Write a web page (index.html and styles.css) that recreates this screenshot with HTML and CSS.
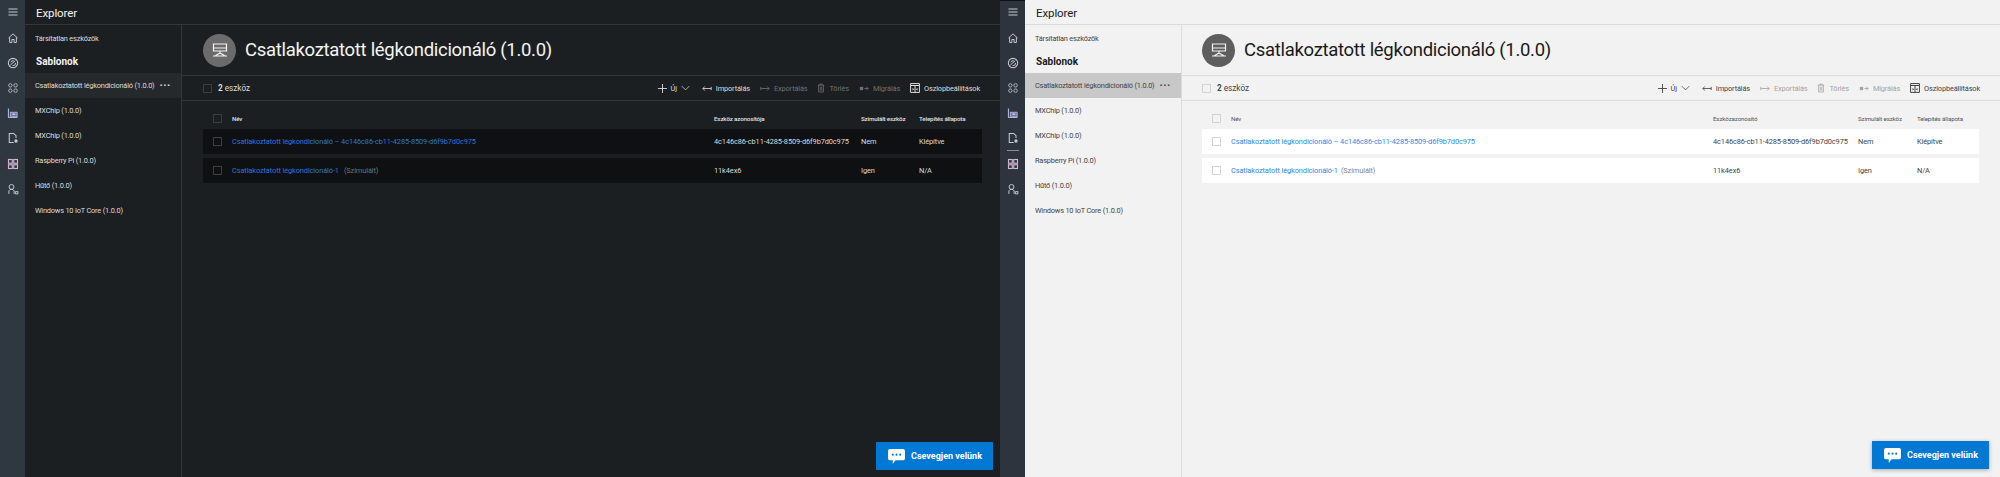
FILE: index.html
```html
<!DOCTYPE html>
<html lang="hu">
<head>
    <meta charset="UTF-8">
    <title>Explorer</title>
    <link rel="stylesheet" href="styles.css">
</head>
<body>
    <svg class="sprite" width="0" height="0">
        <symbol id="i-menu" viewBox="0 0 16 16"><path d="M2 4h12M2 8h12M2 12h12" fill="none" stroke="currentColor" stroke-width="1.6"/></symbol>
        <symbol id="i-home" viewBox="0 0 16 16"><path d="M2 8l6-5.500L14 8M3.500 7v7h3v-4h3v4h3V7" fill="none" stroke="currentColor" stroke-width="1.300"/></symbol>
        <symbol id="i-gauge" viewBox="0 0 16 16"><circle cx="8" cy="8" r="6.200" fill="none" stroke="currentColor" stroke-width="1.400"/><path d="M4.500 10.500L11 5M5 7a3.500 3.500 0 0 1 4-2M11.500 8a3.500 3.500 0 0 1-4 3.500" fill="none" stroke="currentColor" stroke-width="1.300"/></symbol>
        <symbol id="i-apps" viewBox="0 0 16 16"><g fill="none" stroke="currentColor" stroke-width="1.100"><circle cx="4.500" cy="4.500" r="2.300"/><circle cx="11.500" cy="4.500" r="2.300"/><circle cx="4.500" cy="11.500" r="2.300"/><circle cx="11.500" cy="11.500" r="2.300"/></g></symbol>
        <symbol id="i-chart" viewBox="0 0 16 16"><path d="M2 2v12h12" fill="none" stroke="#9fb6e0" stroke-width="1.600"/><path d="M4.500 7h9v6h-9z" fill="#5f78b0" stroke="#d9b9d4" stroke-width="1.100"/><path d="M7 9.500h4" stroke="#fff" stroke-width="1.200"/></symbol>
        <symbol id="i-doc" viewBox="0 0 16 16"><path d="M9 14H3V2h6l3 3v3" fill="none" stroke="currentColor" stroke-width="1.400"/><circle cx="12" cy="12" r="2.200" fill="currentColor"/></symbol>
        <symbol id="i-grid" viewBox="0 0 16 16"><g fill="none" stroke="#d6b8d6" stroke-width="1.500"><rect x="2" y="2" width="5" height="5"/><rect x="9" y="2" width="5" height="5"/><rect x="2" y="9" width="5" height="5"/><rect x="9" y="9" width="5" height="5"/></g></symbol>
        <symbol id="i-user" viewBox="0 0 16 16"><path d="M2.500 14.500v-4a4 4 0 0 1 7 0v4M6 8.500a3 3 0 1 0 0-6.500 3 3 0 0 0 0 6.500z" fill="none" stroke="currentColor" stroke-width="1.300"/><rect x="11.500" y="11.500" width="3" height="3" fill="none" stroke="currentColor" stroke-width="1.200"/></symbol>
        <symbol id="i-device" viewBox="0 0 16 16"><path d="M1.500 2h13v7h-13zM1.500 6h13M8 9v2M3 14l5-3 5 3zM1 14h14" fill="none" stroke="currentColor" stroke-width="1.200"/></symbol>
        <symbol id="i-plus" viewBox="0 0 12 12"><path d="M6 0v12M0 6h12" fill="none" stroke="currentColor" stroke-width="1.200"/></symbol>
        <symbol id="i-chevron" viewBox="0 0 12 8"><path d="M1 1.500l5 5 5-5" fill="none" stroke="currentColor"/></symbol>
        <symbol id="i-import" viewBox="0 0 12 8"><path d="M1 4h10M3.500 1.500L1 4l2.500 2.500M11 2v4" fill="none" stroke="currentColor"/></symbol>
        <symbol id="i-export" viewBox="0 0 12 8"><path d="M1 4h10M8.500 1.500L11 4 8.500 6.500M1 2v4" fill="none" stroke="currentColor"/></symbol>
        <symbol id="i-trash" viewBox="0 0 10 12"><path d="M1 2.500h8M3.500 2.500V1h3v1.500M2 2.500V11h6V2.500M4 4.500v5M6 4.500v5" fill="none" stroke="currentColor"/></symbol>
        <symbol id="i-migrate" viewBox="0 0 12 8"><path d="M1 2h4v4H1z" fill="currentColor"/><path d="M6.500 4H11M9 2l2 2-2 2" fill="none" stroke="currentColor"/></symbol>
        <symbol id="i-columns" viewBox="0 0 12 12"><path d="M.7.700h10.600v10.600H.7zM.7 3h10.600M6 3v8.300" fill="none" stroke="currentColor" stroke-width="1.200"/><path d="M3 6l2 1.500L3 9zM9 6L7 7.500 9 9z" fill="currentColor"/></symbol>
        <symbol id="i-chat" viewBox="0 0 18 16"><path d="M2 0h14a2 2 0 0 1 2 2v8a2 2 0 0 1-2 2H8l-3 4v-4H2a2 2 0 0 1-2-2V2a2 2 0 0 1 2-2z" fill="currentColor"/><circle cx="5" cy="6" r="1.100" fill="#0078d4"/><circle cx="9" cy="6" r="1.100" fill="#0078d4"/><circle cx="13" cy="6" r="1.100" fill="#0078d4"/></symbol>
    </svg>

    <!-- dark theme -->
    <div class="pane pane-dark">
        <nav class="rail">
            <svg class="rail-icon menu"><use href="#i-menu"/></svg>
            <svg class="rail-icon"><use href="#i-home"/></svg>
            <svg class="rail-icon"><use href="#i-gauge"/></svg>
            <svg class="rail-icon"><use href="#i-apps"/></svg>
            <svg class="rail-icon"><use href="#i-chart"/></svg>
            <svg class="rail-icon last"><use href="#i-doc"/></svg>
            <span class="rail-sep"></span>
            <svg class="rail-icon"><use href="#i-grid"/></svg>
            <svg class="rail-icon"><use href="#i-user"/></svg>
        </nav>
        <div class="shell">
            <header class="topbar">Explorer</header>
            <div class="body">
                <aside class="side">
                    <div class="side-link">Társítatlan eszközök</div>
                    <div class="side-title">Sablonok</div>
                    <div class="side-item selected">Csatlakoztatott légkondicionáló (1.0.0)<span class="dots">···</span></div>
                    <div class="side-item">MXChip (1.0.0)</div>
                    <div class="side-item">MXChip (1.0.0)</div>
                    <div class="side-item">Raspberry Pi (1.0.0)</div>
                    <div class="side-item">Hűtő (1.0.0)</div>
                    <div class="side-item">Windows 10 IoT Core (1.0.0)</div>
                </aside>
                <main class="main">
                    <div class="title-row">
                        <div class="avatar"><svg><use href="#i-device"/></svg></div>
                        <h1>Csatlakoztatott légkondicionáló (1.0.0)</h1>
                    </div>
                    <div class="toolbar">
                        <span class="check"></span>
                        <span class="count"><b>2</b> eszköz</span>
                        <div class="actions">
                            <span class="action new"><svg class="ic-plus"><use href="#i-plus"/></svg>Új<svg class="ic-chev"><use href="#i-chevron"/></svg></span>
                            <span class="action"><svg class="ic"><use href="#i-import"/></svg>Importálás</span>
                            <span class="action off"><svg class="ic"><use href="#i-export"/></svg>Exportálás</span>
                            <span class="action off"><svg class="ic-trash"><use href="#i-trash"/></svg>Törlés</span>
                            <span class="action off"><svg class="ic"><use href="#i-migrate"/></svg>Migrálás</span>
                            <span class="action"><svg class="ic-cols"><use href="#i-columns"/></svg>Oszlopbeállítások</span>
                        </div>
                    </div>
                    <div class="table">
                        <div class="row head">
                            <span class="check"></span><span>Név</span><span>Eszköz azonosítója</span><span>Szimulált eszköz</span><span>Telepítés állapota</span>
                        </div>
                        <div class="row">
                            <span class="check"></span><a class="link">Csatlakoztatott légkondicionáló – 4c146c86-cb11-4285-8509-d6f9b7d0c975</a><span>4c146c86-cb11-4285-8509-d6f9b7d0c975</span><span>Nem</span><span>Kiépítve</span>
                        </div>
                        <div class="row">
                            <span class="check"></span><span><a class="link">Csatlakoztatott légkondicionáló-1</a><span class="sim">(Szimulált)</span></span><span>11k4ex6</span><span>Igen</span><span>N/A</span>
                        </div>
                    </div>
                </main>
            </div>
        </div>
        <div class="chat"><svg><use href="#i-chat"/></svg>Csevegjen velünk</div>
    </div>

    <!-- light theme -->
    <div class="pane pane-light">
        <nav class="rail">
            <svg class="rail-icon menu"><use href="#i-menu"/></svg>
            <svg class="rail-icon"><use href="#i-home"/></svg>
            <svg class="rail-icon"><use href="#i-gauge"/></svg>
            <svg class="rail-icon"><use href="#i-apps"/></svg>
            <svg class="rail-icon"><use href="#i-chart"/></svg>
            <svg class="rail-icon last"><use href="#i-doc"/></svg>
            <span class="rail-sep"></span>
            <svg class="rail-icon"><use href="#i-grid"/></svg>
            <svg class="rail-icon"><use href="#i-user"/></svg>
        </nav>
        <div class="shell">
            <header class="topbar">Explorer</header>
            <div class="body">
                <aside class="side">
                    <div class="side-link">Társítatlan eszközök</div>
                    <div class="side-title">Sablonok</div>
                    <div class="side-item selected">Csatlakoztatott légkondicionáló (1.0.0)<span class="dots">···</span></div>
                    <div class="side-item">MXChip (1.0.0)</div>
                    <div class="side-item">MXChip (1.0.0)</div>
                    <div class="side-item">Raspberry Pi (1.0.0)</div>
                    <div class="side-item">Hűtő (1.0.0)</div>
                    <div class="side-item">Windows 10 IoT Core (1.0.0)</div>
                </aside>
                <main class="main">
                    <div class="title-row">
                        <div class="avatar"><svg><use href="#i-device"/></svg></div>
                        <h1>Csatlakoztatott légkondicionáló (1.0.0)</h1>
                    </div>
                    <div class="toolbar">
                        <span class="check"></span>
                        <span class="count"><b>2</b> eszköz</span>
                        <div class="actions">
                            <span class="action new"><svg class="ic-plus"><use href="#i-plus"/></svg>Új<svg class="ic-chev"><use href="#i-chevron"/></svg></span>
                            <span class="action"><svg class="ic"><use href="#i-import"/></svg>Importálás</span>
                            <span class="action off"><svg class="ic"><use href="#i-export"/></svg>Exportálás</span>
                            <span class="action off"><svg class="ic-trash"><use href="#i-trash"/></svg>Törlés</span>
                            <span class="action off"><svg class="ic"><use href="#i-migrate"/></svg>Migrálás</span>
                            <span class="action"><svg class="ic-cols"><use href="#i-columns"/></svg>Oszlopbeállítások</span>
                        </div>
                    </div>
                    <div class="table">
                        <div class="row head">
                            <span class="check"></span><span>Név</span><span>Eszközazonosító</span><span>Szimulált eszköz</span><span>Telepítés állapota</span>
                        </div>
                        <div class="row">
                            <span class="check"></span><a class="link">Csatlakoztatott légkondicionáló – 4c146c86-cb11-4285-8509-d6f9b7d0c975</a><span>4c146c86-cb11-4285-8509-d6f9b7d0c975</span><span>Nem</span><span>Kiépítve</span>
                        </div>
                        <div class="row">
                            <span class="check"></span><span><a class="link">Csatlakoztatott légkondicionáló-1</a><span class="sim">(Szimulált)</span></span><span>11k4ex6</span><span>Igen</span><span>N/A</span>
                        </div>
                    </div>
                </main>
            </div>
        </div>
        <div class="chat"><svg><use href="#i-chat"/></svg>Csevegjen velünk</div>
    </div>
</body>
</html>
```

FILE: styles.css
```css
* {
    box-sizing: border-box;
}

html, body {
    margin: 0;
    height: 100%;
    overflow: hidden;
}

body {
    display: flex;
    font-family: Roboto, "Open Sans", sans-serif;
    font-size: 7.4px;
}

.sprite {
    position: absolute;
}

.pane {
    position: relative;
    display: flex;
    width: 1000px;
    height: 100%;
    background: var(--bg);
    color: var(--text);
}

.pane-dark {
    --bg: #1b1f21;
    --rail: #2f3741;
    --line: #33373a;
    --text: #dcdcdc;
    --strong: #f4f4f4;
    --selected: #26292c;
    --row: #0e1012;
    --link: #2f76d2;
    --muted: #707070;
    --check: #3a3d40;
    --avatar: #6b6b6b;
    --head: #e0e0e0;
    --sep: transparent;
    --pad-left: 21px;
    --pad-right: 18px;
    --chat-right: 7px;
}

.pane-light {
    --bg: #f2f2f2;
    --rail: #2d343d;
    --line: #dcdcdc;
    --text: #444;
    --strong: #1a1a1a;
    --selected: #c8c8c8;
    --row: #fff;
    --link: #2f8ae5;
    --muted: #a4a4a4;
    --check: #d4d4d4;
    --avatar: #5e5e5e;
    --head: #555;
    --sep: #8a9098;
    --pad-left: 20px;
    --pad-right: 21px;
    --chat-right: 11px;
}

/* left icon rail */
.rail {
    display: flex;
    flex-direction: column;
    align-items: center;
    flex: 0 0 25px;
    padding-top: 6px;
    background: var(--rail);
    color: #c6cad0;
}

.rail-icon {
    width: 12px;
    height: 12px;
    margin-bottom: 13px;
}

.rail-icon.menu {
    margin-bottom: 14px;
}

.rail-icon.last {
    margin-bottom: 6px;
}

.rail-sep {
    width: 12px;
    height: 1px;
    margin-bottom: 7px;
    background: var(--sep);
}

.pane-light .rail {
    border-top: 1px solid #111;
    padding-top: 5px;
}

.shell {
    display: flex;
    flex-direction: column;
    flex: 1;
    min-width: 0;
}

.topbar {
    height: 25px;
    padding: 5px 0 0 11px;
    border-bottom: 1px solid var(--line);
    color: var(--strong);
    font-size: 11.5px;
    letter-spacing: -0.1px;
    line-height: 16px;
}

.body {
    display: flex;
    flex: 1;
}

/* explorer column */
.side {
    flex: 0 0 157px;
    min-width: 0;
    padding-top: 4px;
    border-right: 1px solid var(--line);
    letter-spacing: -0.2px;
}

.side-link,
.side-item {
    padding-left: 10px;
    white-space: nowrap;
}

.side-link {
    height: 19px;
    line-height: 19px;
}

.side-title {
    height: 25px;
    padding-left: 11px;
    color: var(--strong);
    font-size: 10px;
    font-weight: 700;
    letter-spacing: 0;
    line-height: 28px;
}

.side-item {
    display: flex;
    align-items: center;
    height: 25px;
}

.side-item.selected {
    background: var(--selected);
}

.dots {
    margin-left: 5px;
    font-size: 11px;
    font-weight: 700;
    letter-spacing: 0.5px;
}

/* main area */
.main {
    flex: 1;
    min-width: 0;
}

.title-row {
    display: flex;
    align-items: center;
    gap: 9px;
    height: 51px;
    padding-left: var(--pad-left);
    border-bottom: 1px solid var(--line);
}

.avatar {
    display: flex;
    align-items: center;
    justify-content: center;
    width: 33px;
    height: 33px;
    border-radius: 50%;
    background: var(--avatar);
    color: #f2f2f2;
}

.avatar svg {
    width: 16px;
    height: 16px;
}

h1 {
    margin: 0;
    color: var(--strong);
    font-size: 18.5px;
    font-weight: 400;
    letter-spacing: -0.3px;
}

.toolbar {
    display: flex;
    align-items: center;
    height: 25px;
    padding: 0 20px 0 var(--pad-left);
    border-bottom: 1px solid var(--line);
}

.check {
    display: block;
    width: 9px;
    height: 9px;
    border: 1px solid var(--check);
}

.count {
    margin-left: 6px;
    font-size: 8.2px;
}

.actions {
    display: flex;
    align-items: center;
    gap: 10px;
    margin-left: auto;
    letter-spacing: -0.15px;
}

.action {
    display: flex;
    align-items: center;
    gap: 4px;
    white-space: nowrap;
}

.action.off {
    color: var(--muted);
}

.action.new {
    margin-right: 2px;
}

.ic {
    width: 10px;
    height: 7px;
}

.ic-plus {
    width: 9px;
    height: 9px;
}

.ic-chev {
    width: 9px;
    height: 6px;
}

.ic-trash {
    width: 8px;
    height: 10px;
}

.ic-cols {
    width: 10px;
    height: 10px;
}

.table {
    padding: 7px var(--pad-right) 0 var(--pad-left);
}

.row {
    display: grid;
    grid-template-columns: 19px 482px 147px 58px 1fr;
    align-items: center;
    height: 25px;
    margin-bottom: 4px;
    padding-left: 10px;
    background: var(--row);
    letter-spacing: -0.1px;
    white-space: nowrap;
}

.pane-light .row {
    grid-template-columns: 19px 482px 145px 59px 1fr;
}

.row.head {
    height: 21px;
    margin-bottom: 0;
    background: none;
    color: var(--head);
    font-size: 6.2px;
    font-weight: 500;
    letter-spacing: -0.15px;
}

.pane-light .row.head {
    font-weight: 400;
}

.link {
    color: var(--link);
}

.sim {
    margin-left: 5px;
    color: var(--muted);
}

.pane-light .sim {
    margin-left: 3px;
    color: #888;
}

.chat {
    position: absolute;
    right: var(--chat-right);
    top: 442px;
    display: flex;
    align-items: center;
    gap: 6px;
    width: 117px;
    height: 28px;
    padding-left: 12px;
    background: #0078d4;
    color: #fff;
    font-size: 9px;
    font-weight: 700;
    white-space: nowrap;
}

.chat svg {
    width: 17px;
    height: 15px;
}

.pane-light .chat {
    top: 441px;
    box-shadow: 0 1px 4px rgba(0, 0, 0, 0.3);
}
```
